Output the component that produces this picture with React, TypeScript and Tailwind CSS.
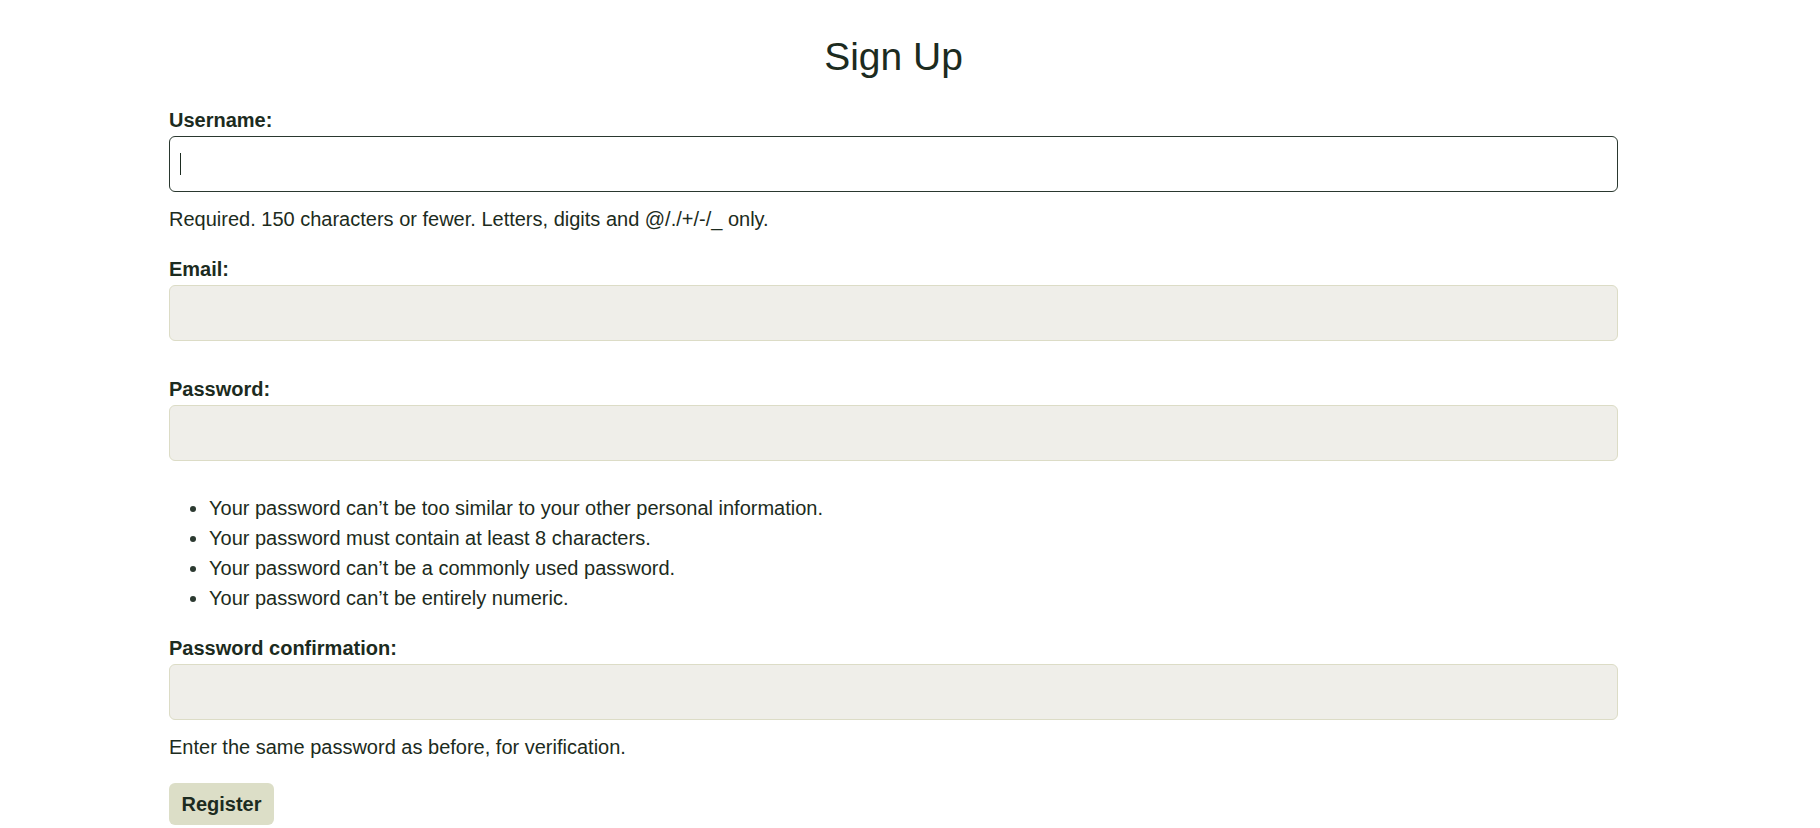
import React from 'react';

const rules = [
  'Your password can’t be too similar to your other personal information.',
  'Your password must contain at least 8 characters.',
  'Your password can’t be a commonly used password.',
  'Your password can’t be entirely numeric.',
];

const Label = ({ children, className = '' }: { children: React.ReactNode; className?: string }) => (
  <label className={`block font-bold text-[20px] leading-[23px] text-[#1c2b20] ${className}`}>{children}</label>
);

const Field = ({ className = '' }: { className?: string }) => (
  <input
    type="password"
    className={`block w-full h-[56px] rounded-[6px] border border-[#dcdcc6] bg-[#efeee9] px-3 outline-none ${className}`}
  />
);

export default function App() {
  return (
    <div className="min-h-screen bg-white font-['Liberation_Sans',Arial,sans-serif] text-[#1c2b20]">
      <div className="ml-[169px] w-[1449px] pt-[34px]">
        <h1 className="text-center text-[39px] leading-[45px] font-normal">Sign Up</h1>

        <form className="flex flex-col" onSubmit={(e) => e.preventDefault()}>
          <Label className="mt-[30px]">Username:</Label>
          <div className="mt-[4px] h-[56px] rounded-[6px] border border-[#2a382f] bg-white flex items-center px-[10px]">
            <span className="block w-px h-[22px] bg-[#1c2b20]" />
          </div>
          <p className="mt-[16px] text-[20px] leading-[23px]">
            Required. 150 characters or fewer. Letters, digits and @/./+/-/_ only.
          </p>

          <Label className="mt-[27px]">Email:</Label>
          <Field className="mt-[4px]" />

          <Label className="mt-[37px]">Password:</Label>
          <Field className="mt-[4px]" />

          <ul className="mt-[36px] pl-[40px] list-disc text-[20px] leading-[23px] flex flex-col gap-[7px] marker:text-[#2c3a31]">
            {rules.map((r) => (
              <li key={r}>{r}</li>
            ))}
          </ul>

          <Label className="mt-[27px]">Password confirmation:</Label>
          <Field className="mt-[4px]" />

          <p className="mt-[16px] text-[20px] leading-[23px]">Enter the same password as before, for verification.</p>

          <div className="mt-[24px]">
            <button
              type="submit"
              className="h-[42px] w-[105px] rounded-[6px] bg-[#dcdec7] font-bold text-[20px] text-[#1c2b20]"
            >
              Register
            </button>
          </div>
        </form>
      </div>
    </div>
  );
}
